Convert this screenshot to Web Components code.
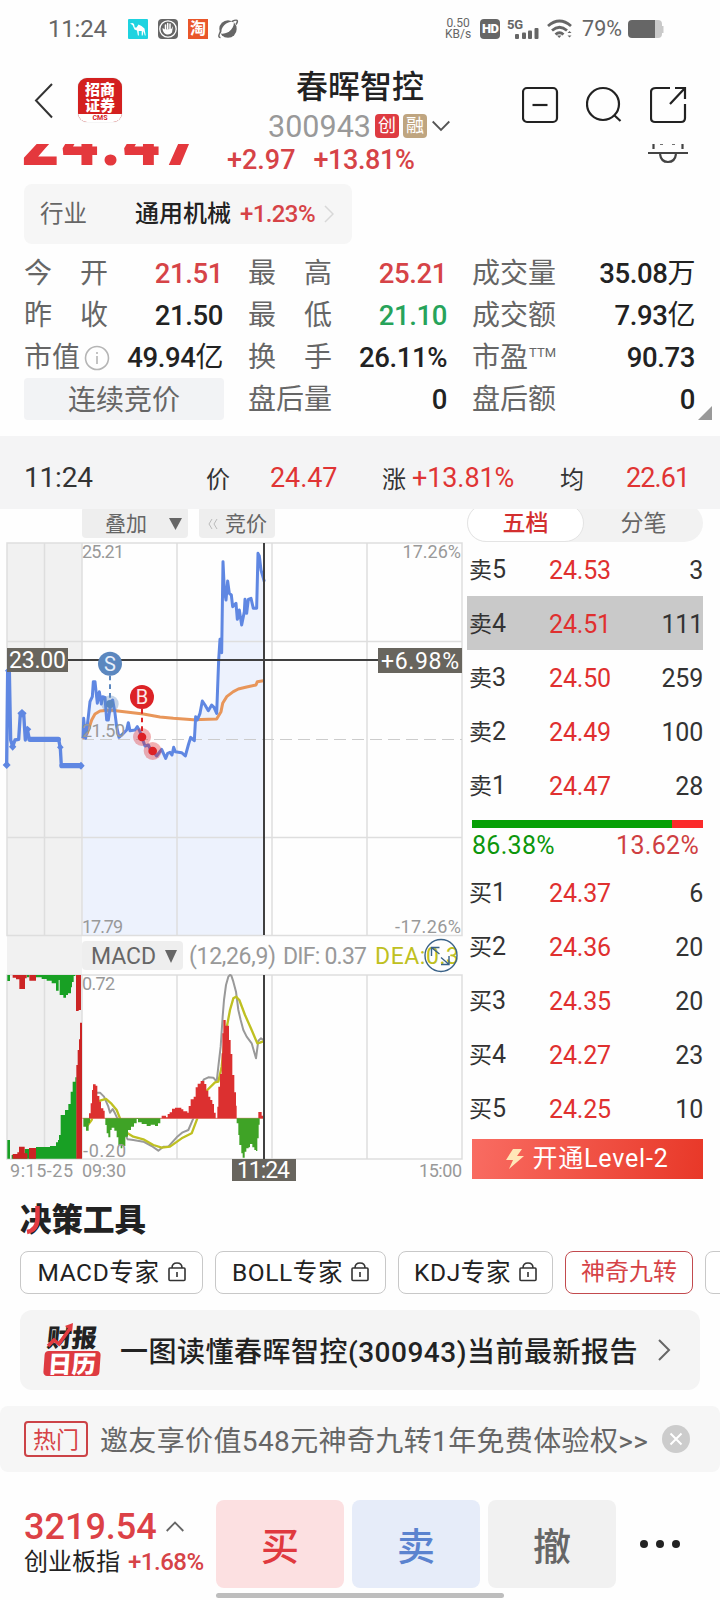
<!DOCTYPE html>
<html lang="zh-CN">
<head>
<meta charset="UTF-8">
<title>春晖智控 300943</title>
<style>
  body {
    margin: 0;
    width: 720px;
    height: 1600px;
    overflow: hidden;
    background: #fefefe;
    color: #222;
    font-family: Roboto, "Noto Sans CJK SC", sans-serif;
  }
  .market { display: flex; height: 690px; }
</style>
</head>
<body>
<status-bar></status-bar>
<app-header name="春晖智控" code="300943"></app-header>
<price-row></price-row>
<quote-grid>
  <quote-item label="今 开" value="21.51" tone="up"></quote-item>
  <quote-item label="最 高" value="25.21" tone="up"></quote-item>
  <quote-item label="成交量" value="35.08" unit="万"></quote-item>
  <quote-item label="昨 收" value="21.50"></quote-item>
  <quote-item label="最 低" value="21.10" tone="down"></quote-item>
  <quote-item label="成交额" value="7.93" unit="亿"></quote-item>
  <quote-item label="市值" value="49.94" unit="亿">
    <svg width="26" height="26" viewBox="0 0 26 26" fill="none" stroke="#b5b5b5" stroke-width="1.600" style="margin-right:-2px"><circle cx="13" cy="13" r="11.500"/><path d="M13 11v8M13 7v2"/></svg>
  </quote-item>
  <quote-item label="换 手" value="26.11%"></quote-item>
  <quote-item label="市盈" value="90.73"><span style="font-size:13px;position:relative;top:-5px">TTM</span></quote-item>
  <quote-item phase="连续竞价"></quote-item>
  <quote-item label="盘后量" value="0"></quote-item>
  <quote-item label="盘后额" value="0"></quote-item>
</quote-grid>
<cursor-band></cursor-band>
<div class="market">
  <stock-chart></stock-chart>
  <order-book></order-book>
</div>
<tool-section>
  <tool-chip lock style="width:183px">MACD专家</tool-chip>
  <tool-chip lock style="width:171px">BOLL专家</tool-chip>
  <tool-chip lock style="width:155px">KDJ专家</tool-chip>
  <tool-chip active style="width:128px">神奇九转</tool-chip>
  <tool-chip style="width:60px"></tool-chip>
</tool-section>
<report-card>一图读懂春晖智控(300943)当前最新报告</report-card>
<hot-banner>邀友享价值548元神奇九转1年免费体验权&gt;&gt;</hot-banner>
<trade-bar>
  <trade-button kind="buy">买</trade-button>
  <trade-button kind="sell">卖</trade-button>
  <trade-button kind="cancel">撤</trade-button>
</trade-bar>

<script>
class BaseElement extends HTMLElement {
  constructor() {
    super();
    this.attachShadow({ mode: 'open' });
  }

  connectedCallback() {
    this.shadowRoot.innerHTML = this.render();
  }
}

class StatusBar extends BaseElement {
  render() {
    return `
    <style>
      :host { display: flex; align-items: center; height: 57px; padding: 0 56px 0 48px; color: #666; box-sizing: border-box; margin-bottom: 1px; }
      .time { font-size: 24px; width: 80px; letter-spacing: -.2px; }
      .apps { display: flex; gap: 10px; flex: 1; }
      .tao { width: 20px; height: 20px; background: #e9562a; color: #fff; font-size: 16px; line-height: 19px; text-align: center; font-weight: 700; }
      .speed { font-size: 12px; line-height: 11px; text-align: center; width: 28px; margin-right: 8px; }
      .hd { background: #666; color: #fff; border-radius: 4px; font-weight: 900; font-size: 13px; width: 20px; height: 20px; line-height: 20px; text-align: center; letter-spacing: -.6px; margin-right: 7px; }
      .pct { font-size: 21.500px; margin: 0 6px 0 9px; }
      svg { display: block; overflow: visible; }
    </style>
    <span class="time">11:24</span>
    <div class="apps">
      <svg width="20" height="20" viewBox="0 0 20 20"><rect width="20" height="20" rx="1" fill="#1ed3e0"/><path d="M2 4.500 4.500 4l1.500 1 .8 3.500 1.700 0 2-3 3 1.500 3 2.500 1.200 7h-.9L15.500 12l-.8 4.500h-1V12l-3 0 .2 4.500h-1L9 11.500 6.500 10.500 4.500 6z" fill="#fff"/></svg>
      <svg width="20" height="20" viewBox="0 0 20 20"><rect width="20" height="20" rx="4" fill="#666"/><circle cx="10" cy="10" r="8.200" fill="none" stroke="#fff" stroke-width="1.300"/><path d="M7 10.500 4.500 9q0 4 3 6 4 1.500 6.500-1.500l1-6.500-1.700 3z" fill="#fff"/><path d="M7.500 11V6M9.700 10V4.500M12 10.500V5" stroke="#fff" stroke-width="1.500" stroke-linecap="round"/></svg>
      <span class="tao">淘</span>
      <svg width="20" height="20" viewBox="0 0 20 20"><circle cx="10" cy="10" r="8.700" fill="#666"/><path d="M3 14.500C3 7.500 8 2.500 15.500 2.500 17.500 8 10 16 3 14.500z" fill="#fefefe"/><path d="M3 11.500C.5 16 0 18.500 2.500 18.500M14 2.500c5-2.500 7-1.500 4 3" fill="none" stroke="#666" stroke-width="1.500"/></svg>
    </div>
    <span class="speed">0.50<br>KB/s</span>
    <span class="hd">HD</span>
    <svg width="34" height="20" viewBox="0 0 34 20" fill="#666"><text x="0" y="10" font-size="13" font-weight="700" textLength="16">5G</text><rect x="8" y="15" width="4" height="5" rx="1"/><rect x="15" y="13.500" width="4" height="6.500" rx="1"/><rect x="21" y="11.500" width="4" height="8.500" rx="1"/><rect x="27.500" y="9" width="4" height="11" rx="1"/></svg>
    <svg width="26" height="20" viewBox="0 0 26 20" fill="none" stroke="#666" stroke-width="2.800" style="margin-left:6px"><path d="M1 7Q12.500-3 24 7M5 11.500q7.500-6.500 15 0M8.500 15.500q4-3.500 8 0"/><path d="M10 16.500h4.500L12.200 19zM20.500 14h4L22.500 12zM20.500 16.500h4L22.500 18.500z" fill="#666" stroke="none"/></svg>
    <span class="pct">79%</span>
    <svg width="36" height="18" viewBox="0 0 36 18"><path d="M26 0h4q4 0 4 4v2h1.500v7H34v1q0 4-4 4h-4z" fill="#c9c9c9"/><path d="M4 0h23v18H4q-4 0-4-4V4q0-4 4-4z" fill="#666"/></svg>`;
  }
}

class AppHeader extends BaseElement {
  render() {
    return `
    <style>
      :host { display: grid; grid-template-columns: 220px 280px 1fr; height: 86px; }
      .left { display: flex; padding: 20px 0 0 34px; gap: 25px; }
      .back { margin-top: 5px; }
      .logo { width: 44px; height: 44px; border-radius: 9px; background: #d3201f; color: #fff; overflow: hidden; box-shadow: 0 0 1px #aaa; text-align: center; font: 900 15px/16px "Noto Sans CJK SC", sans-serif; padding-top: 3px; box-sizing: border-box; }
      .logo i { display: block; background: #fff; color: #d3201f; font: 700 7px/8px Roboto, sans-serif; margin-top: 1px; }
      .mid { text-align: center; }
      .name { font-size: 32px; line-height: 40px; font-weight: 500; margin-top: 9px; }
      .sub { display: flex; align-items: center; justify-content: center; height: 32px; margin: 3px 0 0 -2px; font-size: 30.500px; color: #999; }
      .tag { width: 24px; height: 24px; border-radius: 4px; background: #de3b41; color: #fff; font-size: 18px; line-height: 24px; margin-left: 4px; }
      .tag.gold { background: #bfa580; }
      .sub svg { margin-left: 5px; }
      .icons { display: flex; justify-content: flex-end; gap: 26px; padding: 28px 32px 0 0; }
    </style>
    <div class="left">
      <svg class="back" width="19" height="36" viewBox="0 0 19 36" fill="none" stroke="#333" stroke-width="2"><path d="M18 1 2 17.500 18 34.500"/></svg>
      <div class="logo">招商<br>证券<i>CMS</i></div>
    </div>
    <div class="mid">
      <div class="name">${this.getAttribute('name')}</div>
      <div class="sub">${this.getAttribute('code')}<span class="tag">创</span><span class="tag gold">融</span>
        <svg width="18" height="12" viewBox="0 0 18 12" fill="none" stroke="#555" stroke-width="1.800"><path d="M.7 1.500 9 10l8.300-8.500"/></svg>
      </div>
    </div>
    <div class="icons">
      <svg width="38" height="38" viewBox="0 0 38 38" fill="none" stroke="#222" stroke-width="2.200"><rect x="1" y="2" width="34" height="34" rx="4"/><path d="M10.500 19h15"/></svg>
      <svg width="38" height="38" viewBox="0 0 38 38" fill="none" stroke="#222" stroke-width="2.200"><circle cx="17" cy="18" r="16"/><path d="m28 29 6.500 6"/></svg>
      <svg width="38" height="38" viewBox="0 0 38 38" fill="none" stroke="#222" stroke-width="2.200"><path d="M20 2H6Q1 2 1 6v26q0 4 4 4h26q4 0 4-4V18M25 2h10v11M35 2 20 18"/></svg>
    </div>`;
  }
}

class PriceRow extends BaseElement {
  render() {
    return `
    <style>
      :host { display: block; height: 104px; overflow: hidden; }
      .line { display: flex; height: 40px; padding: 0 32px 0 21px; overflow: hidden; }
      .last { font-size: 66px; line-height: 64px; font-weight: 900; margin-top: -33px; color: #e4383d; width: 206px; letter-spacing: 1.600px; }
      .chg { font-size: 27px; line-height: 33px; font-weight: 500; color: #d64347; white-space: pre; }
      .bell { margin-left: auto; }
      .industry { display: flex; align-items: center; width: 328px; height: 60px; box-sizing: border-box; margin-left: 24px; padding: 0 16px; background: #f6f6f6; border-radius: 8px; font-size: 24px; line-height: 30px; white-space: nowrap; }
      .industry span { color: #666; width: 95px; font-size: 23.500px; flex: none; }
      .industry b { font-weight: 500; flex: none; }
      .industry em { font-style: normal; font-weight: 500; color: #d64347; margin: 0 9px 0 9px; letter-spacing: -.6px; }
    </style>
    <div class="line">
      <div class="last">24.47</div>
      <div class="chg">+2.97</div><div class="chg" style="margin-left:18px;letter-spacing:-.4px">+13.81%</div>
      <svg class="bell" width="40" height="22" viewBox="0 0 40 22" fill="none" stroke="#444" stroke-width="2.200"><path d="M5.500 0v5M34.500 0v5M0 9h40M12 10q1 8 8 8t8-8"/><path d="M12 0h3M24 0h3" stroke-width="1.500"/></svg>
    </div>
    <div class="industry"><span>行业</span><b>通用机械</b><em>+1.23%</em>
      <svg width="10" height="18" viewBox="0 0 10 18" fill="none" stroke="#d8d8d8" stroke-width="1.500"><path d="m1 1 8 8-8 8"/></svg>
    </div>`;
  }
}

class QuoteGrid extends BaseElement {
  render() {
    return `
    <style>
      :host { display: grid; position: relative; grid-template-columns: 199px 199px 223px; column-gap: 25px; grid-auto-rows: 42px; height: 188px; padding: 4px 0 0 24px; box-sizing: border-box; }
      .corner { position: absolute; right: 8px; bottom: 16px; width: 14px; height: 14px; background: #999; clip-path: polygon(100% 0, 100% 100%, 0 100%); }
    </style>
    <slot></slot><div class="corner"></div>`;
  }
}

class QuoteItem extends BaseElement {
  render() {
    const phase = this.getAttribute('phase');
    const tones = { up: '#d64347', down: '#27a35a' };
    const color = tones[this.getAttribute('tone')] || '#222';
    if (phase) {
      return `
      <style>
        :host { display: block; background: #f2f3f5; border-radius: 4px; color: #666; font-size: 28px; line-height: 46px; height: 42px; text-align: center; margin-right: -1px; }
      </style>${phase}`;
    }
    const label = this.getAttribute('label').split(' ').map(t => `<span>${t}</span>`).join('');
    return `
    <style>
      :host { display: flex; align-items: center; justify-content: space-between; height: 43px; line-height: 43px; white-space: nowrap; }
      .label { display: flex; align-items: center; justify-content: space-between; width: 84px; font-size: 28px; color: #666; }
      .value { font-size: 27.500px; font-weight: 500; color: ${color}; letter-spacing: -.4px; }
      .value i { font-style: normal; font-weight: 400; font-size: 28px; }
      ::slotted(*) { flex: none; }
    </style>
    <div class="label">${label}<slot></slot></div>
    <div class="value">${this.getAttribute('value')}<i>${this.getAttribute('unit') || ''}</i></div>`;
  }
}

class CursorBand extends BaseElement {
  render() {
    return `
    <style>
      :host { display: grid; grid-template-columns: 182px 64px 112px 30px 148px 66px 1fr; align-items: center; height: 73px; padding: 10px 0 0 24px; box-sizing: border-box; background: #f4f4f5; color: #333; font-size: 24px; position: relative; z-index: 1; }
      .time { font-size: 28px; letter-spacing: -.2px; }
      b { font-weight: 400; font-size: 27px; color: #e03434; letter-spacing: -.1px; }
    </style>
    <span class="time">11:24</span>
    <span>价</span><b>24.47</b>
    <span>涨</span><b>+13.81%</b>
    <span>均</span><b style="letter-spacing:-.9px">22.61</b>`;
  }
}

// Series are plotted on a 3x grid; each group scales them down to screen size.
const PRE_PRICE = '20,795 23,512 28,512 32,720 38,740 45,720 56,718 61,640 71,640 76,720 82,688 88,718 176,718 181,745 184,797 243,797';
const PRICE = '249,715 251,655 257,715 265,650 270,605 277,590 280,545 285,545 292,610 298,575 304,612 308,590 315,592 320,660 325,660 333,605 338,600 345,640 350,680 357,712 370,700 380,690 385,668 390,692 405,690 412,680 420,695 425,710 435,738 445,735 452,750 460,755 470,768 478,757 485,748 497,775 503,760 510,757 516,765 521,742 526,755 545,758 556,768 565,735 572,712 583,722 587,650 592,660 600,640 607,603 615,615 625,632 635,615 642,622 650,640 656,480 660,418 665,458 669,185 673,270 678,300 683,243 688,280 694,285 698,320 708,310 712,358 718,330 725,375 733,335 735,298 740,340 745,298 753,295 760,325 770,325 774,160 778,168 783,210 793,245';
const AVG = '247,715 262,700 275,660 285,642 300,633 330,630 360,634 430,642 480,651 520,655 580,659 650,657 663,635 668,610 680,590 700,575 715,567 740,561 768,555 772,545 790,542';
const DIF = '287,578 300,578 312,590 325,620 330,638 338,627 345,640 352,655 383,718 400,720 430,725 455,738 475,752 490,740 505,740 530,712 548,697 565,690 580,655 600,560 612,538 625,532 640,533 650,545 655,500 662,440 668,350 672,300 678,255 685,230 690,225 694,227 700,245 708,275 715,330 722,360 730,390 740,410 755,430 768,475 775,422 783,415 790,420';
const DEA = '260,680 275,660 285,625 300,602 318,597 335,612 350,630 360,655 370,690 383,700 400,710 430,718 460,735 485,743 510,740 545,715 575,700 592,655 605,600 622,570 645,547 655,545 665,500 675,410 690,330 700,295 708,290 718,300 735,345 755,390 772,430 780,428 790,424';

const BARS = [
  ['#18a024', 225, '22,243 30,225 80,232 88,225 108,232 125,237 140,242 155,250 168,272 176,240 179,285 190,293 198,285 204,280 213,262 216,246 221,228 226,225'],
  ['#cc2424', 225, '38,233 48,238 58,267 75,235 80,225 88,242 108,225 228,333 236,330 243,225'],
  ['#18a024', 776, '22,720 30,776 35,765 57,760 74,747 88,760 108,741 150,738 168,727 174,720 177,705 182,645 195,630 205,612 212,575 218,545 226,532 230,776'],
  ['#cc2424', 776, '38,762 52,757 57,740 74,760 82,776 87,744 108,776 229,495 233,450 237,418 240,368 246,776'],
  ['#3fa326', 655, '250,680 258,692 266,670 270,655'],
  ['#dc3030', 655, '267,640 272,610 276,570 279,553 287,557 292,588 298,605 303,625 310,632 314,655'],
  ['#3fa326', 655, '316,675 320,700 325,712 331,690 335,683 343,692 350,712 355,735 362,745 367,738 376,710 384,690 393,680 402,670 410,657 414,667 425,672 440,678 452,674 465,678 474,670 481,655'],
  ['#dc3030', 655, '485,647 498,652 503,642 509,637 516,626 525,623 544,628 550,634 562,638 566,618 572,598 581,590 587,562 593,551 602,543 613,552 619,572 625,590 631,600 637,612 642,638 647,655 652,620 655,560 660,522 665,460 667,400 670,360 677,377 687,420 692,462 697,525 703,577 708,617 710,655 775,636 785,647 790,655'],
  ['#3fa326', 655, '710,670 715,705 718,735 724,760 728,773 734,755 739,745 746,742 750,732 757,742 763,750 768,753 772,715 776,674 779,655']
];

function barPath(base, list) {
  const pts = list.split(' ').map(p => p.split(','));
  let d = `M${pts[0][0]} ${base}`;
  pts.forEach(([x, y]) => { d += `H${x}V${y}`; });
  return d + `V${base}z`;
}

class StockChart extends BaseElement {
  render() {
    return `
    <style>
      :host { display: block; width: 466px; height: 690px; flex: none; }
      svg { display: block; }
      text { fill: #999; font-size: 18px; }
      .big { font-size: 23px; }
      .btn { fill: #eee; }
      .grid { stroke: #dedede; stroke-width: 1.500; fill: none; }
      .cross { stroke: #404040; stroke-width: 2; }
      .tip { fill: #68655e; }
      .tip-text { fill: #fff; font-size: 23px; }
      .line { fill: none; stroke-linejoin: round; }
    </style>
    <svg width="466" height="690" viewBox="0 509 466 690">
      <rect class="btn" x="82" y="507" width="106" height="31" rx="4"/>
      <text x="105" y="531" style="font-size:21px;fill:#666">叠加</text>
      <path d="M169 518h13l-6.500 12z" fill="#666"/>
      <rect class="btn" x="199" y="507" width="76" height="31" rx="4"/>
      <path d="m212 519-3 5 3 5M217 519l-3 5 3 5" fill="none" stroke="#bbb"/>
      <text x="225" y="531" style="font-size:21px;fill:#666">竞价</text>

      <path d="M7 543h75v616H7z" fill="#f1f1f1"/>
      <polygon transform="translate(0 500) scale(.33333)" points="247,1305 ${PRICE} 793,1305" fill="#edf2fd"/>
      <path class="grid" d="M7 543h455v392.500H7zM7 641.500h455M7 837.500h455M44.500 543v392M82 543v392M177 543v392M272 543v392M367 543v392"/>
      <path class="grid" d="M7 975h455v184H7zM44.500 975v184M82 975v184M177 975v184M272 975v184M367 975v184"/>
      <path d="M82 739.500h380" stroke="#ccc" stroke-dasharray="12 6"/>
      <g transform="translate(0 500) scale(.33333)">
        <polyline class="line" points="${AVG}" stroke="#e8965a" stroke-width="9"/>
        <polyline class="line" points="${PRE_PRICE}" stroke="#5f87e2" stroke-width="10"/>
        <path d="M90 718h85M186 797h54" stroke="#5f87e2" stroke-width="16" stroke-linecap="round"/>
        <path d="m20 783 12 12-12 12-12-12zM38 728l11 12-11 12-11-12zM66 627l14 13-14 13-14-13zM82 677l12 11-12 11-12-11zM243 785l11 12-11 12-11-12zM181 732l10 10-10 10-10-10zM24 503l9 9-9 9-9-9z" fill="#5f87e2"/>
        <polyline class="line" points="${PRICE}" stroke="#5f87e2" stroke-width="9"/>
      </g>
      <text x="82" y="558" textLength="42">25.21</text>
      <text x="82" y="736.500" textLength="43">21.50</text>
      <text x="82" y="932.500" textLength="41">17.79</text>
      <text x="461" y="558" text-anchor="end">17.26%</text>
      <text x="461" y="932.500" text-anchor="end" textLength="66">-17.26%</text>

      <path class="cross" d="M68 660h310M264 543v392M264 975v184"/>
      <g transform="translate(0 500) scale(.33333)">
        <path d="M330 527v80" stroke="#5b87bf" stroke-width="6" stroke-dasharray="14 12"/>
        <path d="M426 627v80" stroke="#dc2226" stroke-width="6" stroke-dasharray="14 12"/>
        <circle cx="330" cy="612" r="26" fill="#5b87bf" opacity=".35"/><circle cx="330" cy="612" r="12" fill="#5b87bf"/>
        <circle cx="426" cy="711" r="27" fill="#dc2226" opacity=".35"/><circle cx="426" cy="711" r="13" fill="#dc2226"/>
        <circle cx="458" cy="753" r="27" fill="#dc2226" opacity=".35"/><circle cx="458" cy="753" r="13" fill="#dc2226"/>
        <circle cx="330" cy="491" r="36" fill="#5b87bf"/><circle cx="426" cy="591" r="36" fill="#dc2226"/>
      </g>
      <text x="110" y="671" text-anchor="middle" style="font-size:20px;fill:#e6eefa">S</text>
      <text x="142" y="704" text-anchor="middle" style="font-size:20px;fill:#fde8e8">B</text>
      <rect class="tip" x="7" y="648" width="61" height="24"/><text class="tip-text" x="9" y="668" textLength="57">23.00</text>
      <rect class="tip" x="378" y="648" width="84" height="25"/><text class="tip-text" x="381" y="669" textLength="78">+6.98%</text>

      <rect class="btn" x="82" y="941" width="101" height="29" rx="4"/>
      <text class="big" x="91" y="964" textLength="65" style="fill:#666">MACD</text>
      <path d="M165 950h12l-6 13z" fill="#666"/>
      <text class="big" x="189" y="964" textLength="87">(12,26,9)</text>
      <text class="big" x="283" y="964" textLength="84">DIF: 0.37</text>
      <text class="big" x="375" y="964" textLength="84" style="fill:#bfc021">DEA:0.3</text>
      <g fill="none" stroke="#3a6288" stroke-width="1.400"><circle cx="441" cy="955.500" r="16"/><path d="M431.500 956v-8.500h8M432 948l7.500 6M449 956v8.500h-8M448.500 964l-7.500-6.500"/></g>

      <g transform="translate(0 900) scale(.33333)">
        <polyline class="line" points="${DIF}" stroke="#999" stroke-width="6"/>
        <polyline class="line" points="${DEA}" stroke="#bfc021" stroke-width="7"/>
        <path d="M247 655h546" stroke="#dc7060" stroke-width="3"/>
        ${BARS.map(([color, base, list]) => `<path d="${barPath(base, list)}" fill="${color}"/>`).join('')}
      </g>
      <text x="82" y="990" textLength="33">0.72</text>
      <text x="83" y="1156.500" textLength="43">-0.20</text>
      <path class="cross" d="M264 975v184"/>
      <text x="10" y="1176.500" textLength="63">9:15-25</text>
      <text x="82" y="1176.500" textLength="44">09:30</text>
      <text x="462" y="1176.500" text-anchor="end" textLength="43">15:00</text>
      <rect class="tip" x="232" y="1159" width="64" height="22"/><text class="tip-text" x="237" y="1178" textLength="53">11:24</text>
    </svg>`;
  }
}

class OrderRow extends BaseElement {
  render() {
    return `
    <style>
      :host { display: grid; grid-template-columns: 60px 102px 1fr; align-items: center; height: 54px; margin: 0 17px 0 1px; padding-left: 2px; font-size: 25px; line-height: 55px; }
      :host([selected]) { background: #c9c9c9; }
      span { font-size: 23px; color: #333; white-space: nowrap; }
      span i { font-style: normal; font-size: 25px; }
      b { font-weight: 400; color: #e0302f; text-align: center; letter-spacing: -.2px; }
      em { font-style: normal; text-align: right; color: #333; letter-spacing: -.2px; }
    </style>
    <span>${this.getAttribute('side')}<i>${this.getAttribute('level')}</i></span>
    <b>${this.getAttribute('price')}</b>
    <em>${this.getAttribute('volume')}</em>`;
  }
}

class OrderBook extends BaseElement {
  render() {
    const asks = [[5, '24.53', 3], [4, '24.51', 111], [3, '24.50', 259], [2, '24.49', 100], [1, '24.47', 28]];
    const bids = [[1, '24.37', 6], [2, '24.36', 20], [3, '24.35', 20], [4, '24.27', 23], [5, '24.25', 10]];
    const row = (side, [level, price, volume]) =>
      `<order-row side="${side}" level="${level}" price="${price}" volume="${volume}"${side === '卖' && level === 4 ? ' selected' : ''}></order-row>`;
    return `
    <style>
      :host { display: block; flex: 1; }
      .tabs { display: flex; height: 38px; margin: -5px 17px 0 1px; background: #f2f2f2; border-radius: 19px; font-size: 23px; line-height: 39px; text-align: center; color: #666; }
      .tabs span { flex: 1; }
      .tabs .on { flex: none; width: 117px; box-sizing: border-box; border: 1px solid #e4e4e4; background: #fff; border-radius: 19px; color: #d32f2f; font-weight: 500; line-height: 37px; }
      .ratio { display: flex; height: 8px; margin: 8px 17px 0 6px; background: #fb2b2b; }
      .ratio i { width: 86.380%; background: #06a006; }
      .pct { display: flex; justify-content: space-between; margin: 0 21px 0 6px; font-size: 25px; line-height: 35px; height: 37px; color: #cf3f42; letter-spacing: .3px; }
      .pct span:first-child { color: #0c960c; }
      .level2 { display: flex; align-items: center; justify-content: center; gap: 8px; height: 40px; margin: 4px 17px 0 6px; background: linear-gradient(100deg, #f96c62, #e83828); color: #fff; font-size: 25px; letter-spacing: .8px; line-height: 40px; }
    </style>
    <div class="tabs"><span class="on">五档</span><span>分笔</span></div>
    ${asks.map(r => row('卖', r)).join('')}
    <div class="ratio"><i></i></div>
    <div class="pct"><span>86.38%</span><span>13.62%</span></div>
    ${bids.map(r => row('买', r)).join('')}
    <div class="level2">
      <svg width="18" height="20" viewBox="0 0 18 20"><path d="M7 0h9l-5 7h7L3 20l4-9H0z" fill="#ffe7b8"/></svg>开通Level-2
    </div>`;
  }
}

class ToolSection extends BaseElement {
  render() {
    return `
    <style>
      :host { display: block; height: 111px; overflow: hidden; }
      .title { position: relative; padding: 0 0 0 20px; height: 52px; line-height: 43px; font-size: 31.500px; font-weight: 900; color: #222; }
      .title svg { position: absolute; left: 20px; top: 5px; }
      .chips { display: flex; gap: 12px; padding-left: 20px; width: 800px; }
    </style>
    <div class="title">决策工具
      <svg width="30" height="32" viewBox="0 0 30 32"><path d="M17.500 2v13q-.5 11-10.500 13" fill="none" stroke="#e33b40" stroke-width="4.500"/></svg>
    </div>
    <div class="chips"><slot></slot></div>`;
  }
}

class ToolChip extends BaseElement {
  render() {
    const lock = this.hasAttribute('lock')
      ? '<svg width="18" height="20" viewBox="0 0 18 20" fill="none" stroke="#333" stroke-width="1.600"><rect x="1" y="6" width="16" height="12.500" rx="1"/><path d="M4 6q0-5 5-5t5 5M9 10v5"/></svg>'
      : '';
    return `
    <style>
      :host { display: flex; align-items: center; justify-content: center; gap: 8px; flex: none; height: 43px; box-sizing: border-box; border: 1px solid #c8c8c8; border-radius: 8px; font-size: 24px; line-height: 41px; background: #fff; white-space: nowrap; }
      :host([lock]) { letter-spacing: .6px; font-size: 24.500px; }
      :host([active]) { border-color: #c24a4e; color: #d64347; }
      svg { position: relative; top: -1px; }
    </style>
    <span><slot></slot></span>${lock}`;
  }
}

class ReportCard extends BaseElement {
  render() {
    return `
    <style>
      :host { display: flex; align-items: center; height: 80px; margin: 0 20px; padding: 0 29px 0 24px; background: #f4f4f4; border-radius: 12px; box-sizing: border-box; font-size: 28px; font-weight: 500; white-space: nowrap; }
      .logo { width: 56px; margin-right: 20px; font: 900 25px/25px "Noto Sans CJK SC", sans-serif; text-align: center; position: relative; }
      .logo div { transform: skewX(-6deg); }
      .logo .cal { background: #de3b41; color: #fff; border-radius: 4px; height: 25px; line-height: 24px; margin-top: 2px; font-size: 24px; transform: skewX(-4deg); }
      .logo svg { position: absolute; left: 2px; top: -1px; }
      .text { flex: 1; letter-spacing: .5px; }
    </style>
    <div class="logo"><div>财报</div><div class="cal">日历</div>
      <svg width="28" height="26" viewBox="0 0 28 26"><path d="m2 23 6-6 5 4L25 4" fill="none" stroke="#e33b40" stroke-width="3.500"/><path d="m19 3 8-3-1 9z" fill="#e33b40"/></svg>
    </div>
    <span class="text"><slot></slot></span>
    <svg width="13" height="22" viewBox="0 0 13 22" fill="none" stroke="#666" stroke-width="2"><path d="m1 1 10 10L1 21"/></svg>`;
  }
}

class HotBanner extends BaseElement {
  render() {
    return `
    <style>
      :host { display: flex; align-items: center; height: 66px; margin-top: 16px; padding: 0 30px 0 24px; background: #f6f6f6; border-radius: 8px; box-sizing: border-box; font-size: 28px; color: #666; white-space: nowrap; }
      .tag { width: 64px; height: 36px; box-sizing: border-box; border: 2px solid #cc4347; border-radius: 4px; font-size: 23px; line-height: 35px; text-align: center; color: #d64347; margin-right: 12px; }
      .text { flex: 1; letter-spacing: .37px; }
    </style>
    <span class="tag">热门</span><span class="text"><slot></slot></span>
    <svg width="28" height="28" viewBox="0 0 28 28"><circle cx="14" cy="14" r="14" fill="#ccc"/><path d="m8.500 8.500 11 11m0-11-11 11" stroke="#fff" stroke-width="2"/></svg>`;
  }
}

class TradeBar extends BaseElement {
  render() {
    return `
    <style>
      :host { display: flex; position: relative; height: 128px; padding: 28px 0 0 24px; box-sizing: border-box; }
      .index { width: 192px; flex: none; white-space: nowrap; }
      .num { display: flex; align-items: center; font-size: 36px; font-weight: 500; color: #dc4146; height: 43px; padding-top: 5px; gap: 9px; }
      .name { font-size: 24px; line-height: 28px; }
      .name b { font-weight: 500; color: #d64347; margin-left: 8px; letter-spacing: -.5px; }
      .buttons { display: flex; gap: 8px; }
      .more { margin: 40px 0 0 24px; }
      .home { position: absolute; left: 216px; bottom: 2px; width: 288px; height: 5px; border-radius: 3px; background: #bdbdbd; }
    </style>
    <div class="index">
      <div class="num">3219.54<svg width="18" height="11" viewBox="0 0 18 11" fill="none" stroke="#666" stroke-width="1.800"><path d="m.7 10 8.300-8.500L17.300 10"/></svg></div>
      <div class="name">创业板指<b>+1.68%</b></div>
    </div>
    <div class="buttons"><slot></slot></div>
    <svg class="more" width="40" height="8" viewBox="0 0 40 8" fill="#222"><circle cx="4" cy="4" r="4"/><circle cx="20" cy="4" r="4"/><circle cx="36" cy="4" r="4"/></svg>
    <div class="home"></div>`;
  }
}

class TradeButton extends BaseElement {
  render() {
    const [bg, color] = {
      buy: ['#fce0e1', '#e0393e'],
      sell: ['#e6ecf9', '#5b83cf'],
      cancel: ['#f1f1f1', '#666']
    }[this.getAttribute('kind')];
    return `
    <style>
      :host { display: block; width: 128px; height: 88px; border-radius: 8px; background: ${bg}; color: ${color}; font-size: 38px; font-weight: 500; line-height: 94px; text-align: center; }
    </style><slot></slot>`;
  }
}

customElements.define('status-bar', StatusBar);
customElements.define('app-header', AppHeader);
customElements.define('price-row', PriceRow);
customElements.define('quote-grid', QuoteGrid);
customElements.define('quote-item', QuoteItem);
customElements.define('cursor-band', CursorBand);
customElements.define('stock-chart', StockChart);
customElements.define('order-row', OrderRow);
customElements.define('order-book', OrderBook);
customElements.define('tool-section', ToolSection);
customElements.define('tool-chip', ToolChip);
customElements.define('report-card', ReportCard);
customElements.define('hot-banner', HotBanner);
customElements.define('trade-bar', TradeBar);
customElements.define('trade-button', TradeButton);
</script>
</body>
</html>
